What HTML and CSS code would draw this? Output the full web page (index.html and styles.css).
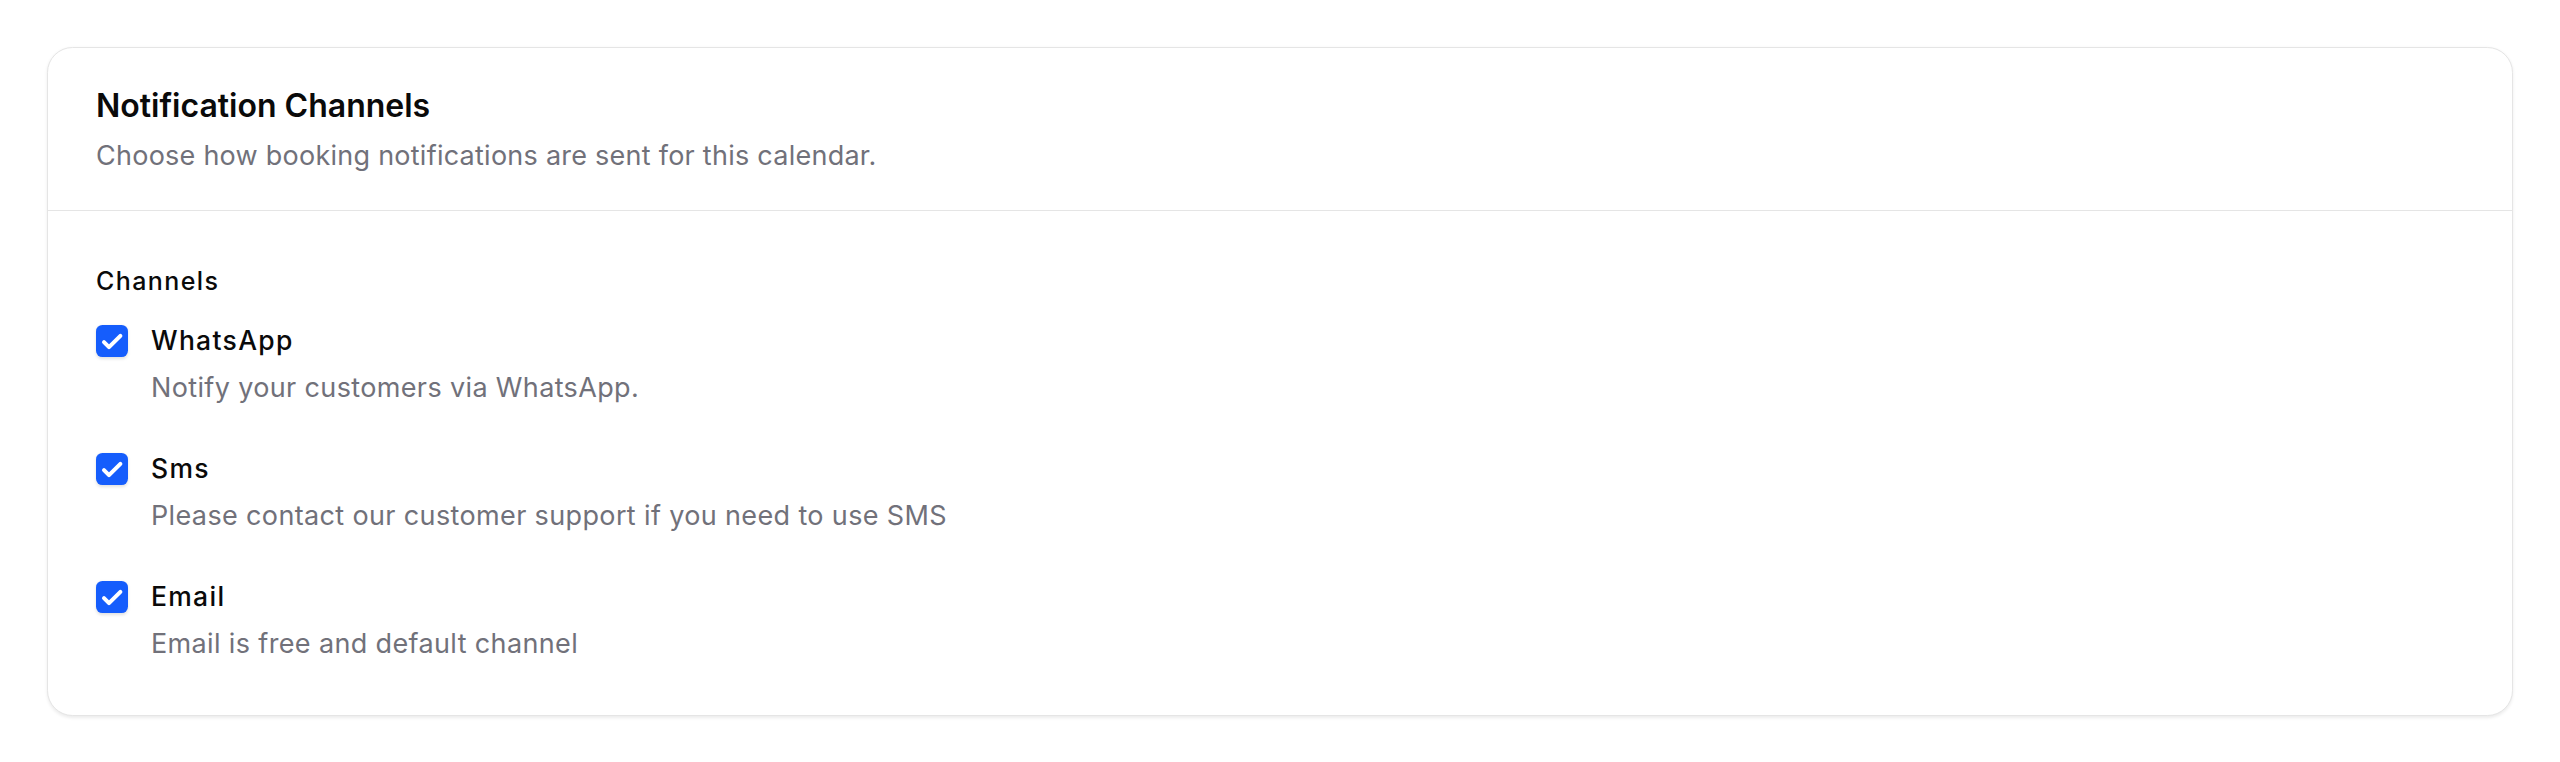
FILE: index.html
```html
<!DOCTYPE html>
<html lang="en">
<head>
    <meta charset="UTF-8">
    <meta name="viewport" content="width=device-width, initial-scale=1.0">
    <title>Notification Channels</title>
    <link rel="stylesheet" href="styles.css">
</head>
<body>
    <div class="page">
        <section class="card">
            <header class="card-header">
                <h2 class="card-title">Notification Channels</h2>
                <p class="card-desc">Choose how booking notifications are sent for this calendar.</p>
            </header>

            <div class="card-body">
                <div class="group-label">Channels</div>

                <div class="channel-list">
                    <div class="channel">
                        <label class="channel-row">
                            <span class="check">
                                <svg viewBox="0 0 32 32"><path d="M8 17.2l5 5L24.4 10.8"/></svg>
                            </span>
                            <span class="channel-name">WhatsApp</span>
                        </label>
                        <p class="channel-desc">Notify your customers via WhatsApp.</p>
                    </div>

                    <div class="channel">
                        <label class="channel-row">
                            <span class="check">
                                <svg viewBox="0 0 32 32"><path d="M8 17.2l5 5L24.4 10.8"/></svg>
                            </span>
                            <span class="channel-name">Sms</span>
                        </label>
                        <p class="channel-desc">Please contact our customer support if you need to use SMS</p>
                    </div>

                    <div class="channel">
                        <label class="channel-row">
                            <span class="check">
                                <svg viewBox="0 0 32 32"><path d="M8 17.2l5 5L24.4 10.8"/></svg>
                            </span>
                            <span class="channel-name">Email</span>
                        </label>
                        <p class="channel-desc">Email is free and default channel</p>
                    </div>
                </div>
            </div>
        </section>
    </div>
</body>
</html>
```

FILE: styles.css
```css
* {
    box-sizing: border-box;
}

body {
    margin: 0;
    font-family: 'Inter', 'Noto Sans', sans-serif;
    background: #ffffff;
    color: #0a0a0a;
}

.page {
    padding: 47px 47px;
}

.card {
    background: #fff;
    border: 1.6px solid #e5e5e5;
    border-radius: 25.6px;
    box-shadow: 0 1.6px 3.2px rgba(0, 0, 0, 0.08);
}

.card-header {
    padding: 38px 48px 34px;
    border-bottom: 1.6px solid #e5e5e5;
}

.card-title {
    margin: 0;
    font-size: 32px;
    line-height: 40px;
    font-weight: 600;
    color: #0a0a0a;
}

.card-desc {
    margin: 10px 0 0;
    font-size: 27px;
    line-height: 40px;
    letter-spacing: 0.25px;
    color: #71717a;
}

.card-body {
    padding: 51.2px 48px 51.2px;
}

.group-label {
    font-size: 25px;
    line-height: 38.4px;
    font-weight: 500;
    letter-spacing: 1.4px;
    margin-bottom: 20.8px;
}

.channel-list {
    display: flex;
    flex-direction: column;
    gap: 41.6px;
}

.channel-row {
    display: flex;
    align-items: center;
    gap: 23px;
}

.check {
    width: 32px;
    height: 32px;
    border-radius: 6.4px;
    background: #155dfc;
    box-shadow: 0 1.6px 3.2px rgba(0, 0, 0, 0.12);
    display: flex;
    flex-shrink: 0;
}

.check svg {
    width: 32px;
    height: 32px;
    fill: none;
    stroke: #fff;
    stroke-width: 4;
    stroke-linecap: round;
    stroke-linejoin: round;
}

.channel-name {
    font-size: 26.5px;
    line-height: 38.4px;
    font-weight: 500;
    letter-spacing: 1.3px;
}

.channel-desc {
    margin: 9.6px 0 0 55px;
    font-size: 27px;
    line-height: 38.4px;
    letter-spacing: 0.36px;
    color: #71717a;
}
```
